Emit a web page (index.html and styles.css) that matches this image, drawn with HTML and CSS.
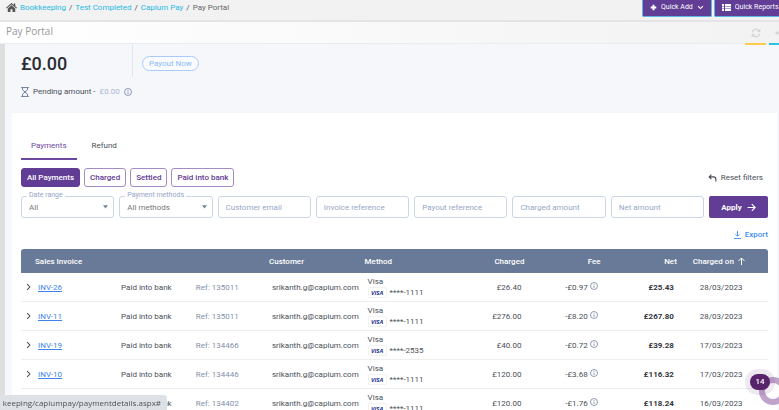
FILE: index.html
```html
<!DOCTYPE html>
<html lang="en">
<head>
<meta charset="UTF-8">
<title>Pay Portal</title>
<link rel="stylesheet" href="styles.css">
</head>
<body>
<svg class="defs">
	<symbol id="info" viewBox="0 0 16 16"><circle cx="8" cy="8" r="7" fill="none" stroke="currentColor" stroke-width="1.6"/><path d="M8 7v5M8 4v1.6" stroke="currentColor" stroke-width="1.6"/></symbol>
	<symbol id="caret" viewBox="0 0 8 8"><path d="M0 2h8L4 7z" fill="currentColor"/></symbol>
	<symbol id="down" viewBox="0 0 10 10"><path d="M1.500 3L5 6.500 8.500 3" fill="none" stroke="currentColor" stroke-width="1.600"/></symbol>
	<symbol id="next" viewBox="0 0 10 10"><path d="M3 1l4 4-4 4" fill="none" stroke="currentColor" stroke-width="1.500"/></symbol>
</svg>
<div class="app">
	<header class="topbar">
		<nav class="crumbs">
			<svg class="home" viewBox="0 0 22 18"><path fill="#555" d="M11 0L0 9.500l1.300 1.500L11 2.800l9.700 8.200L22 9.500l-3.500-3V1h-3v3zM11 4.500L3.500 11v7h5.500v-5.500h4V18h5.500v-7z"/></svg>
			<a href="#">Bookkeeping</a><span>/</span>
			<a href="#">Test Completed</a><span>/</span>
			<a href="#">Capium Pay</a><span>/</span>
			<b>Pay Portal</b>
		</nav>
		<div class="quick">
			<button><svg viewBox="0 0 10 10"><path d="M5 1v8M1 5h8" stroke="#fff" stroke-width="2.800"/></svg>Quick Add<svg viewBox="0 0 10 10"><use href="#down"/></svg></button>
			<button><svg class="wide" viewBox="0 0 18 14"><path d="M0 2h4M6 2h12M0 7h4M6 7h12M0 12h4M6 12h12" stroke="#fff" stroke-width="3.600"/></svg>Quick Reports<svg viewBox="0 0 10 10"><use href="#down"/></svg></button>
		</div>
	</header>
	<div class="titlebar">
		<h1>Pay Portal</h1>
		<div class="tools">
			<button class="refresh" aria-label="Refresh"><svg viewBox="0 0 16 16"><path d="M2 7a6 6 0 0 1 10.500-3M14 9a6 6 0 0 1-10.500 3" fill="none" stroke="currentColor" stroke-width="2"/><path d="M15 1v5.500H9.500zM1 15V9.500h5.500z" fill="currentColor"/></svg></button>
			<button class="back" aria-label="Back"><svg viewBox="0 0 16 16"><path d="M0 8l5-4v3h11v2H5v3z" fill="currentColor"/></svg></button>
		</div>
	</div>
	<main>
		<section class="balance">
			<div class="funds">
				<div class="amount">£0.00</div>
				<button class="payout">Payout Now</button>
			</div>
			<div class="pending">
				<svg class="glass" viewBox="0 0 14 18"><path d="M0 1h14M0 17h14M2.500 1v4l9 8v4M11.500 1v4l-9 8v4" fill="none" stroke="currentColor" stroke-width="1.800"/></svg>
				Pending amount - <span>£0.00</span>
				<svg class="info"><use href="#info"/></svg>
			</div>
		</section>
		<section class="card">
			<nav class="tabs">
				<a class="active" href="#">Payments</a>
				<a href="#">Refund</a>
			</nav>
			<div class="chips">
				<button class="active">All Payments</button>
				<button>Charged</button>
				<button>Settled</button>
				<button>Paid into bank</button>
				<button class="reset"><svg viewBox="0 0 16 14"><path d="M6 1L2 5l4 4M2 5h8q4 0 4 4v4" fill="none" stroke="currentColor" stroke-width="2"/></svg>Reset filters</button>
			</div>
			<form class="filters">
				<div class="field">
					<label for="range">Date range</label>
					<select id="range"><option>All</option></select>
					<svg><use href="#caret"/></svg>
				</div>
				<div class="field">
					<label for="methods">Payment methods</label>
					<select id="methods"><option>All methods</option></select>
					<svg><use href="#caret"/></svg>
				</div>
				<div class="field"><input type="text" placeholder="Customer email" aria-label="Customer email"></div>
				<div class="field"><input type="text" placeholder="Invoice reference" aria-label="Invoice reference"></div>
				<div class="field"><input type="text" placeholder="Payout reference" aria-label="Payout reference"></div>
				<div class="field"><input type="text" placeholder="Charged amount" aria-label="Charged amount"></div>
				<div class="field"><input type="text" placeholder="Net amount" aria-label="Net amount"></div>
				<button type="button" class="apply">Apply<svg viewBox="0 0 16 16"><path d="M1 8h13M8.500 2L14.500 8l-6 6" fill="none" stroke="currentColor" stroke-width="2"/></svg></button>
			</form>
			<div class="export">
				<a href="#"><svg viewBox="0 0 14 16"><path d="M7 0v10M3 6.500l4 4 4-4M0 15h14" fill="none" stroke="currentColor" stroke-width="1.800"/></svg>Export</a>
			</div>
			<table>
				<colgroup><col class="c-inv"><col class="c-status"><col class="c-ref"><col class="c-cust"><col class="c-num"><col class="c-num"><col class="c-fee"><col class="c-fee"><col class="c-date"></colgroup>
				<thead>
					<tr><th class="first">Sales Invoice</th><th></th><th></th><th>Customer</th><th>Method</th><th class="num">Charged</th><th class="num">Fee</th><th class="num">Net</th><th class="date">Charged on <svg viewBox="0 0 14 16"><path d="M7 16V2M1 8l6-6 6 6" fill="none" stroke="currentColor" stroke-width="2"/></svg></th></tr>
				</thead>
				<tbody>
					<tr>
						<td class="inv"><svg><use href="#next"/></svg><a href="#">INV-26</a></td><td class="status">Paid into bank</td><td class="ref">Ref: 135011</td><td>srikanth.g@capium.com</td>
						<td>Visa<div class="pan"><i>VISA</i>****-1111</div></td>
						<td class="num">£26.40</td><td class="num">-£0.97 <svg class="info"><use href="#info"/></svg></td><td class="num net">£25.43</td><td class="date">28/03/2023</td>
					</tr>
					<tr>
						<td class="inv"><svg><use href="#next"/></svg><a href="#">INV-11</a></td><td class="status">Paid into bank</td><td class="ref">Ref: 135011</td><td>srikanth.g@capium.com</td>
						<td>Visa<div class="pan"><i>VISA</i>****-1111</div></td>
						<td class="num">£276.00</td><td class="num">-£8.20 <svg class="info"><use href="#info"/></svg></td><td class="num net">£267.80</td><td class="date">28/03/2023</td>
					</tr>
					<tr>
						<td class="inv"><svg><use href="#next"/></svg><a href="#">INV-19</a></td><td class="status">Paid into bank</td><td class="ref">Ref: 134466</td><td>srikanth.g@capium.com</td>
						<td>Visa<div class="pan"><i>VISA</i>****-2535</div></td>
						<td class="num">£40.00</td><td class="num">-£0.72 <svg class="info"><use href="#info"/></svg></td><td class="num net">£39.28</td><td class="date">17/03/2023</td>
					</tr>
					<tr>
						<td class="inv"><svg><use href="#next"/></svg><a href="#">INV-10</a></td><td class="status">Paid into bank</td><td class="ref">Ref: 134446</td><td>srikanth.g@capium.com</td>
						<td>Visa<div class="pan"><i>VISA</i>****-1111</div></td>
						<td class="num">£120.00</td><td class="num">-£3.68 <svg class="info"><use href="#info"/></svg></td><td class="num net">£116.32</td><td class="date">17/03/2023</td>
					</tr>
					<tr>
						<td class="inv"></td><td class="status">Paid into bank</td><td class="ref">Ref: 134402</td><td>srikanth.g@capium.com</td>
						<td>Visa<div class="pan"><i>VISA</i>****-1111</div></td>
						<td class="num">£120.00</td><td class="num">-£1.76 <svg class="info"><use href="#info"/></svg></td><td class="num net">£118.24</td><td class="date">16/03/2023</td>
					</tr>
				</tbody>
			</table>
		</section>
	</main>
</div>
<div class="ring"></div>
<div class="badge">14</div>
<div class="linkbar">keeping/capiumpay/paymentdetails.aspx#</div>
</body>
</html>
```
FILE: styles.css
```css
*{
	box-sizing:border-box;
}
body{
	margin:0;
	font:8px/11px Roboto, sans-serif;
	color:#4a4f58;
	background:#f5f7fb;
}
button,input,select{
	font:inherit;
	color:inherit;
	margin:0;
}
button{
	display:flex;
	align-items:center;
	white-space:nowrap;
}
.defs{
	display:none;
}
.app{
	height:100vh;
	display:flex;
	flex-direction:column;
	overflow:hidden;
}
.topbar{
	flex:none;
	height:22px;
	display:flex;
	justify-content:space-between;
	background:#f2f2f2;
	border-bottom:2px solid #e4e4e4;
}
.crumbs{
	display:flex;
	align-items:center;
	gap:3px;
	height:15px;
	padding-left:6px;
}
.crumbs a{
	color:#27b9e4;
	text-decoration:none;
}
.crumbs b{
	font-weight:400;
	color:#666;
}
.home{
	width:11px;
	height:9px;
}
.quick{
	display:flex;
	gap:2px;
	width:137px;
	height:17px;
}
.quick button{
	flex:none;
	gap:4px;
	padding:0 7px 1px;
	font-size:7px;
	color:#fff;
	background:#623d96;
	border:1px solid #59b8e0;
	border-top:0;
	border-radius:0 0 2px 2px;
}
.quick svg{
	width:7px;
	height:7px;
}
.quick .wide{
	width:9px;
}
.titlebar{
	flex:none;
	height:22px;
	display:flex;
	justify-content:space-between;
	align-items:center;
	padding-left:6px;
	background:linear-gradient(90deg, #fff, #f2f2f2);
	border-bottom:1px solid #e9edf1;
}
.titlebar h1{
	margin:0;
	padding-bottom:3px;
	font:400 10px/14px "Open Sans", sans-serif;
	color:#999;
}
.tools{
	display:flex;
	gap:3px;
	width:34px;
	height:23px;
	align-self:flex-start;
}
.tools button{
	flex:none;
	width:21px;
	padding:0;
	justify-content:center;
	color:#d5d5d5;
	background:none;
	border:0;
	border-bottom:2px solid #fccb4c;
}
.tools .back{
	border-color:#2cc3e6;
}
.tools svg{
	width:10px;
	height:10px;
}
main{
	flex:1;
	min-height:0;
	overflow:hidden;
	border-left:5px solid #dedede;
	padding:0 2px 0 7px;
}
.balance{
	height:69px;
	padding-left:9px;
}
.funds{
	display:flex;
	align-items:center;
	height:33px;
	padding-top:6px;
	background:linear-gradient(#dfe7f3, #dfe7f3) 111px 0/1px 100% no-repeat;
}
.amount{
	width:121px;
	font-size:18px;
	line-height:22px;
	font-weight:500;
	color:#2b2d33;
}
.payout{
	height:15px;
	padding:0 6px;
	color:#8dbaf8;
	background:#f9fbff;
	border:1px solid #a9cbf9;
	border-radius:8px;
}
.pending{
	display:flex;
	align-items:center;
	gap:4px;
	padding-top:9px;
}
.pending span{
	color:#aab6cf;
}
.glass{
	width:8px;
	height:10px;
	color:#71809f;
}
.info{
	width:8px;
	height:8px;
	color:#71809f;
}
.card{
	min-height:100%;
	padding:22px 9px 0;
	background:#fff;
}
.tabs{
	display:flex;
	gap:5px;
}
.tabs a{
	height:25px;
	padding:5px 10px 0;
	color:#4a4f58;
	text-decoration:none;
}
.tabs .active{
	color:#6b479d;
	border-bottom:2px solid #6b479d;
}
.chips{
	display:flex;
	gap:4px;
	margin-top:8px;
}
.chips button{
	height:19px;
	padding:0 5px;
	font-weight:500;
	color:#5f3994;
	background:#fff;
	border:1px solid #a58cc6;
	border-radius:3px;
}
.chips .active{
	color:#fff;
	background:#623d96;
	border-color:#623d96;
}
.chips .reset{
	margin-left:auto;
	gap:4px;
	font-weight:400;
	color:#4a4f58;
	border:0;
}
.reset svg{
	width:9px;
	height:8px;
}
.filters{
	display:flex;
	gap:5px;
	margin-top:9px;
}
.field{
	flex:1;
	min-width:0;
	position:relative;
}
.field label{
	position:absolute;
	top:-5px;
	left:6px;
	padding:0 2px;
	font-size:7px;
	line-height:9px;
	white-space:nowrap;
	color:#95a5c8;
	background:#fff;
}
.field input,.field select{
	display:block;
	width:100%;
	height:22px;
	padding:1px 7px 0;
	background:#fff;
	border:1px solid #ccd6e8;
	border-radius:3px;
	appearance:none;
	color:#777;
}
.field input::placeholder{
	color:#98a7c6;
}
.field svg{
	position:absolute;
	top:8px;
	right:6px;
	width:5px;
	height:5px;
	color:#71809f;
	pointer-events:none;
}
.apply{
	width:59px;
	height:22px;
	padding:0;
	justify-content:center;
	gap:5px;
	font-weight:700;
	color:#fff;
	background:#623d96;
	border:0;
	border-radius:2px;
}
.apply svg{
	width:9px;
	height:9px;
}
.export{
	display:flex;
	justify-content:flex-end;
	padding:11px 0 9px;
}
.export a{
	display:flex;
	align-items:center;
	gap:4px;
	font-weight:500;
	color:#3f8cf5;
	text-decoration:none;
}
.export svg{
	width:7px;
	height:8px;
}
table{
	width:100%;
	table-layout:fixed;
	border-collapse:separate;
	border-spacing:0;
	white-space:nowrap;
}
.c-inv{ width:13.4%; }
.c-status{ width:10%; }
.c-ref{ width:9.8%; }
.c-cust{ width:12.8%; }
.c-num{ width:10.7%; }
.c-fee{ width:10.2%; }
.c-date{ width:12.2%; }
th{
	height:24px;
	padding:0;
	text-align:left;
	font-weight:500;
	color:#fff;
	background:#687a97;
}
th:first-child{
	border-radius:3px 0 0 0;
}
th:last-child{
	border-radius:0 3px 0 0;
}
th.first{
	padding-left:14px;
}
th.date{
	padding-left:16px;
}
th svg{
	width:7px;
	height:8px;
	margin-left:2px;
	vertical-align:-1px;
}
td{
	height:29px;
	padding:0 3px;
	border-bottom:1px solid #eee;
}
td.inv{
	padding-left:4px;
}
.inv svg{
	width:7px;
	height:8px;
	margin-right:6px;
	vertical-align:-1px;
}
.inv a{
	color:#4083ea;
}
td.status,td.ref{
	padding:0;
}
.ref{
	color:#8391a8;
}
.num{
	text-align:right;
}
.net{
	font-weight:700;
	color:#33363c;
}
td.date{
	padding-left:23px;
}
.pan{
	display:flex;
	align-items:center;
	gap:3px;
}
.pan i{
	width:19px;
	height:11px;
	font:italic 700 6px/10px "Open Sans", sans-serif;
	text-align:center;
	color:#26348f;
	border:1px solid #f2f2f5;
	border-radius:2px;
}
.ring{
	position:fixed;
	right:-8px;
	bottom:5px;
	width:28px;
	height:28px;
	border:6px solid #bfa3cb;
	border-radius:50%;
	background:#fff;
}
.badge{
	position:fixed;
	right:9px;
	bottom:20px;
	width:20px;
	height:16px;
	border-radius:8px;
	line-height:16px;
	text-align:center;
	font-weight:500;
	color:#fff;
	background:#57246b;
	box-shadow:0 0 0 5px rgba(87,36,107,.1);
}
.linkbar{
	position:fixed;
	left:0;
	bottom:0;
	width:167px;
	height:15px;
	padding-right:6px;
	display:flex;
	justify-content:flex-end;
	overflow:hidden;
	font:8px/15px "Open Sans", sans-serif;
	color:#4f5358;
	background:#dee1e6;
	border-top-right-radius:3px;
}
```
